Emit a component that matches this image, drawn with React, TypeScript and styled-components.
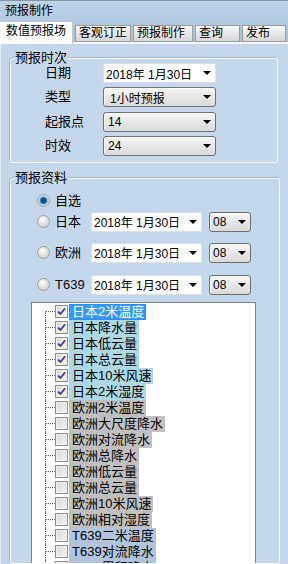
import React from "react";
import styled, { createGlobalStyle } from "styled-components";

const GlobalStyle = createGlobalStyle`
  html, body {
    margin: 0;
    padding: 0;
    background: #c5d8eb;
  }
  body {
    font-family: "Liberation Sans", "Noto Sans CJK SC", sans-serif;
    color: #000;
  }
`;

const Window = styled.div`
  width: 288px;
  height: 564px;
  overflow: hidden;
  display: flex;
  flex-direction: column;
  background: #c5d8eb;
`;

const Header = styled.div`
  background: linear-gradient(#bfd3e9, #a5bfdc);
  border-top: 1px solid #8593a4;
`;

const Title = styled.div`
  height: 21px;
  line-height: 21px;
  padding-left: 5px;
  font-size: 12px;
`;

const TabStrip = styled.div`
  height: 22px;
  display: flex;
  align-items: flex-start;
  gap: 2px;
  box-shadow: inset 0 -2px 0 #f3f6fa;
`;

const Tab = styled.div<{ $w: number; $active?: boolean }>`
  width: ${(p) => p.$w}px;
  flex-shrink: 0;
  box-sizing: border-box;
  font-size: 12px;
  white-space: nowrap;
  ${(p) =>
    p.$active
      ? `
    height: 22px;
    background: #fff;
    padding: 2px 0 0 6px;
    line-height: 15px;
    border-right: 1px solid #c8c8c8;
  `
      : `
    height: 17px;
    margin-top: 3px;
    padding-left: 3px;
    line-height: 15px;
    border: 1px solid #9c9c9c;
    background: linear-gradient(#fafafa, #d6d6d6);
  `}
`;

const Panel = styled.div`
  flex: 1;
  min-height: 0;
  display: flex;
  flex-direction: column;
  border-left: 1px solid #e6eef7;
  padding: 14px 0 0 9px;
`;

const GroupBox = styled.div<{ $w: number; $grow?: boolean; $gap?: number }>`
  width: ${(p) => p.$w}px;
  box-sizing: border-box;
  margin-top: ${(p) => p.$gap ?? 0}px;
  border: 1px solid #fff;
  border-radius: 3px;
  box-shadow: -1px -1px 0 #a4b5c8;
  display: flex;
  flex-direction: column;
  ${(p) => (p.$grow ? "flex: 1; min-height: 0;" : "padding-bottom: 6px;")}
`;

const Caption = styled.span`
  align-self: flex-start;
  margin: -8px 0 0 3px;
  padding: 0 1px;
  height: 14px;
  line-height: 14px;
  font-size: 13px;
  background: #c5d8eb;
`;

const FieldGrid = styled.div`
  display: grid;
  grid-template-columns: 58px 113px;
  grid-auto-rows: 20px;
  row-gap: 4.33px;
  margin-top: -2px;
  padding-left: 34px;
  align-items: center;
`;

const FieldLabel = styled.span`
  font-size: 13px;
  line-height: 20px;
`;

const DateBox = styled.div<{ $w: number }>`
  width: ${(p) => p.$w}px;
  height: 20px;
  box-sizing: border-box;
  border: 1px solid #d9e0e8;
  background: #fff;
  display: flex;
  align-items: center;
  padding-left: 2px;
  font-size: 12px;
  white-space: nowrap;
`;

const Combo = styled.div<{ $w: number; $pad?: number }>`
  width: ${(p) => p.$w}px;
  height: 20px;
  box-sizing: border-box;
  border: 1px solid #707070;
  border-radius: 3px;
  background: linear-gradient(#f7f7f7, #e9e9e9 45%, #dadada);
  box-shadow: inset 1px 1px 0 #fff;
  display: flex;
  align-items: center;
  padding-left: ${(p) => p.$pad ?? 6}px;
  font-size: 12px;
  white-space: nowrap;
`;

const Arrow = styled.span`
  margin-left: auto;
  margin-right: 4px;
  width: 0;
  height: 0;
  border-left: 4px solid transparent;
  border-right: 4px solid transparent;
  border-top: 4px solid #000;
`;

const Options = styled.div`
  display: flex;
  flex-direction: column;
  margin-top: 6px;
  padding-left: 26px;
`;

const OptionRow = styled.div<{ $gap?: number }>`
  height: 20px;
  margin-top: ${(p) => p.$gap ?? 0}px;
  display: flex;
  align-items: center;
`;

const Radio = styled.span<{ $on?: boolean }>`
  width: 13px;
  height: 13px;
  flex-shrink: 0;
  box-sizing: border-box;
  border-radius: 50%;
  border: 1px solid #a0a0a0;
  margin-right: 5px;
  background: ${(p) =>
    p.$on
      ? "radial-gradient(circle, #0b4a88 0 2px, #2c7cc4 3px, #8cc0ea 4px, #dcdcdc 5px, #f4f4f4 6px)"
      : "radial-gradient(circle at 40% 35%, #ffffff, #d3d3d3 70%, #c4c4c4)"};
`;

const OptionLabel = styled.span`
  width: 36px;
  font-size: 13px;
  line-height: 20px;
  white-space: nowrap;
`;

const HourSlot = styled.div`
  margin-left: 7px;
`;

const Tree = styled.div`
  margin: 7px 0 0 20px;
  width: 225px;
  flex: 1;
  box-sizing: border-box;
  border: 1px solid #838383;
  border-bottom: none;
  background: #fff;
  padding: 1px 0 0 13px;
  overflow: hidden;
`;

const Item = styled.div`
  height: 16px;
  display: flex;
  align-items: center;
`;

const Connector = styled.div`
  width: 10px;
  height: 16px;
  display: flex;
  flex-direction: column;
`;

const UpperLine = styled.div<{ $first?: boolean }>`
  height: 8px;
  box-sizing: border-box;
  border-bottom: 1px dotted #6f6f6f;
  border-left: 1px dotted ${(p) => (p.$first ? "transparent" : "#6f6f6f")};
`;

const LowerLine = styled.div`
  flex: 1;
  border-left: 1px dotted #6f6f6f;
`;

const CheckBox = styled.span`
  width: 13px;
  height: 13px;
  flex-shrink: 0;
  box-sizing: border-box;
  border: 1px solid #8e8f8f;
  background: linear-gradient(135deg, #d6d6d6, #f8f8f8);
  box-shadow: inset 0 0 0 1px #f0f0f0;
  display: flex;
  align-items: center;
  justify-content: center;
`;

const ItemText = styled.span<{ $bg: string; $selected?: boolean }>`
  margin-left: 1px;
  height: 16px;
  box-sizing: border-box;
  padding: 0 1px 0 2px;
  line-height: 16px;
  font-size: 13px;
  white-space: nowrap;
  background: ${(p) => (p.$selected ? "#3399ff" : p.$bg)};
  color: ${(p) => (p.$selected ? "#fff" : "#000")};
  border: 1px dotted ${(p) => (p.$selected ? "#b46a00" : "transparent")};
  line-height: 14px;
`;

const JP = "#add8e6";
const EU = "#c0c0c0";
const T6 = "#b0c4de";

const items: { text: string; bg: string; checked: boolean }[] = [
  { text: "日本2米温度", bg: JP, checked: true },
  { text: "日本降水量", bg: JP, checked: true },
  { text: "日本低云量", bg: JP, checked: true },
  { text: "日本总云量", bg: JP, checked: true },
  { text: "日本10米风速", bg: JP, checked: true },
  { text: "日本2米湿度", bg: JP, checked: true },
  { text: "欧洲2米温度", bg: EU, checked: false },
  { text: "欧洲大尺度降水", bg: EU, checked: false },
  { text: "欧洲对流降水", bg: EU, checked: false },
  { text: "欧洲总降水", bg: EU, checked: false },
  { text: "欧洲低云量", bg: EU, checked: false },
  { text: "欧洲总云量", bg: EU, checked: false },
  { text: "欧洲10米风速", bg: EU, checked: false },
  { text: "欧洲相对湿度", bg: EU, checked: false },
  { text: "T639二米温度", bg: T6, checked: false },
  { text: "T639对流降水", bg: T6, checked: false },
  { text: "T639累积降水", bg: T6, checked: false },
  { text: "T639低云量", bg: T6, checked: false },
];

const tabs = [
  { label: "数值预报场", w: 73, active: true },
  { label: "客观订正", w: 56 },
  { label: "预报制作", w: 60 },
  { label: "查询", w: 45 },
  { label: "发布", w: 44 },
];

const models = [
  { label: "日本", gap: 1 },
  { label: "欧洲", gap: 11 },
  { label: "T639", gap: 12 },
];

function Check() {
  return (
    <svg width="9" height="9" viewBox="0 0 9 9">
      <path d="M1 4.6 L3.4 7 L8 1.5" fill="none" stroke="#2b438a" strokeWidth="1.8" />
    </svg>
  );
}

export default function App() {
  return (
    <Window>
      <GlobalStyle />
      <Header>
        <Title>预报制作</Title>
        <TabStrip>
          {tabs.map((t) => (
            <Tab key={t.label} $w={t.w} $active={t.active}>
              {t.label}
            </Tab>
          ))}
        </TabStrip>
      </Header>
      <Panel>
        <GroupBox $w={268}>
          <Caption>预报时次</Caption>
          <FieldGrid>
            <FieldLabel>日期</FieldLabel>
            <DateBox $w={113}>
              2018年 1月30日<Arrow />
            </DateBox>
            <FieldLabel>类型</FieldLabel>
            <Combo $w={113}>
              1小时预报<Arrow />
            </Combo>
            <FieldLabel>起报点</FieldLabel>
            <Combo $w={113} $pad={4}>
              14<Arrow />
            </Combo>
            <FieldLabel>时效</FieldLabel>
            <Combo $w={113} $pad={4}>
              24<Arrow />
            </Combo>
          </FieldGrid>
        </GroupBox>

        <GroupBox $w={270} $grow $gap={15}>
          <Caption>预报资料</Caption>
          <Options>
            <OptionRow>
              <Radio $on />
              <OptionLabel>自选</OptionLabel>
            </OptionRow>
            {models.map((m) => (
              <OptionRow key={m.label} $gap={m.gap}>
                <Radio />
                <OptionLabel>{m.label}</OptionLabel>
                <DateBox $w={111}>
                  2018年 1月30日<Arrow />
                </DateBox>
                <HourSlot>
                  <Combo $w={42} $pad={3}>
                    08<Arrow />
                  </Combo>
                </HourSlot>
              </OptionRow>
            ))}
          </Options>
          <Tree>
            {items.map((it, i) => (
              <Item key={it.text}>
                <Connector>
                  <UpperLine $first={i === 0} />
                  <LowerLine />
                </Connector>
                <CheckBox>{it.checked && <Check />}</CheckBox>
                <ItemText $bg={it.bg} $selected={i === 0}>
                  {it.text}
                </ItemText>
              </Item>
            ))}
          </Tree>
        </GroupBox>
      </Panel>
    </Window>
  );
}
